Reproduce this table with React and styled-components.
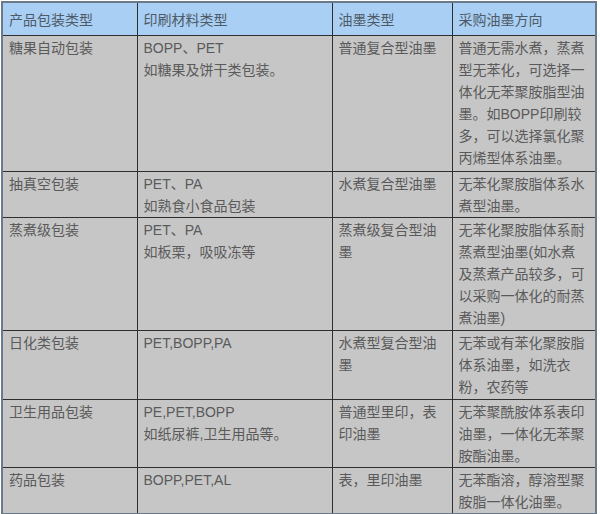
import React from "react";
import styled, { createGlobalStyle } from "styled-components";

const GlobalStyle = createGlobalStyle`
	body {
		margin: 0;
		background: #ffffff;
		font-family: "Liberation Sans", "Noto Sans CJK SC", sans-serif;
	}
`;

const Wrapper = styled.div`
	padding: 1px 0 0 1px;
`;

const Table = styled.table`
	border-collapse: collapse;
	table-layout: fixed;
	width: 594px;
	border: 2px solid #6a7a8a;
	font-size: 14px;
	color: #5a5a5a;
`;

const HeadCell = styled.th`
	background: #a9cff4;
	padding: 6px 0 6px 6px;
	text-align: left;
	font-weight: normal;
	color: #4e5a66;
	border: 1px solid #2f2f2f;
	border-top: none;
	white-space: nowrap;
	overflow: hidden;
`;

const Cell = styled.td`
	background: #c6c6c6;
	padding: 1px 0 ${(p) => p.$pb}px 6px;
	vertical-align: top;
	border: 1px solid #2f2f2f;
	white-space: nowrap;
	overflow: hidden;
`;

const Line = styled.div`
	height: 22px;
	line-height: 22px;
	overflow: hidden;
`;

const columns = [
	{ title: "产品包装类型", width: 135 },
	{ title: "印刷材料类型", width: 195 },
	{ title: "油墨类型", width: 120 },
	{ title: "采购油墨方向", width: 144 },
];

const rows = [
	{
		pb: 2,
		cells: [
			["糖果自动包装"],
			["BOPP、PET", "如糖果及饼干类包装。"],
			["普通复合型油墨"],
			["普通无需水煮，蒸煮", "型无苯化，可选择一", "体化无苯聚胺脂型油", "墨。如BOPP印刷较", "多，可以选择氯化聚", "丙烯型体系油墨。"],
		],
	},
	{
		pb: 0,
		cells: [
			["抽真空包装"],
			["PET、PA", "如熟食小食品包装"],
			["水煮复合型油墨"],
			["无苯化聚胺脂体系水", "煮型油墨。"],
		],
	},
	{
		pb: 1,
		cells: [
			["蒸煮级包装"],
			["PET、PA", "如板栗，吸吸冻等"],
			["蒸煮级复合型油", "墨"],
			["无苯化聚胺脂体系耐", "蒸煮型油墨(如水煮", "及蒸煮产品较多，可", "以采购一体化的耐蒸", "煮油墨)"],
		],
	},
	{
		pb: 1,
		cells: [
			["日化类包装"],
			["PET,BOPP,PA"],
			["水煮型复合型油", "墨"],
			["无苯或有苯化聚胺脂", "体系油墨，如洗衣", "粉，农药等"],
		],
	},
	{
		pb: 0,
		cells: [
			["卫生用品包装"],
			["PE,PET,BOPP", "如纸尿裤,卫生用品等。"],
			["普通型里印，表", "印油墨"],
			["无苯聚酰胺体系表印", "油墨，一体化无苯聚", "胺酯油墨。"],
		],
	},
	{
		pb: 0,
		cells: [
			["药品包装"],
			["BOPP,PET,AL"],
			["表，里印油墨"],
			["无苯酯溶，醇溶型聚", "胺脂一体化油墨。"],
		],
	},
];

export default function App() {
	return (
		<>
			<GlobalStyle />
			<Wrapper>
				<Table>
					<colgroup>
						{columns.map((c) => (
							<col key={c.title} style={{ width: c.width }} />
						))}
					</colgroup>
					<thead>
						<tr>
							{columns.map((c) => (
								<HeadCell key={c.title}>{c.title}</HeadCell>
							))}
						</tr>
					</thead>
					<tbody>
						{rows.map((row, i) => (
							<tr key={i}>
								{row.cells.map((lines, j) => (
									<Cell key={j} $pb={row.pb}>
										{lines.map((line, k) => (
											<Line key={k}>{line}</Line>
										))}
									</Cell>
								))}
							</tr>
						))}
					</tbody>
				</Table>
			</Wrapper>
		</>
	);
}
